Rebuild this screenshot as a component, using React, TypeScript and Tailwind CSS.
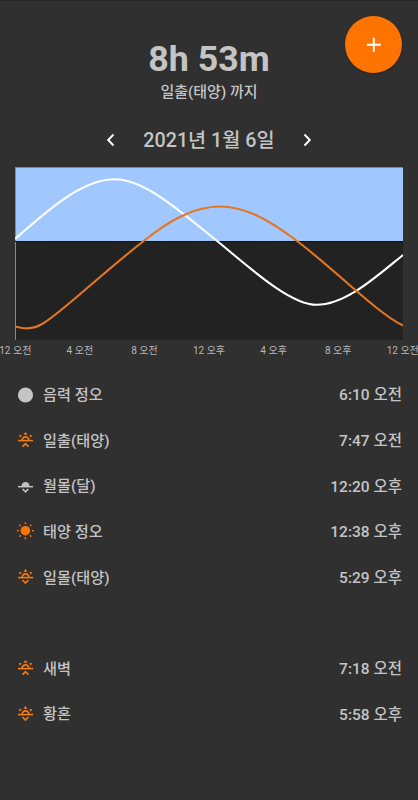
type IconKind = "moon" | "sun" | "sunrise" | "sunset" | "moonset";

const ORANGE = "#ff7300";
const GREY = "#c4c4c4";

const MOON_CURVE =
  "M0 72C33 43 67 12.3 99.7 12.3C130 12.3 166 45 203.3 75C230 96.5 274 137.8 301.5 137.8C331 137.8 362 109 388 88";

const SUN_CURVE =
  "M0 159.5C8 161.5 16 163.5 28 156.5C46 146 84 109 128 74.5C153 54.5 178 39.5 205 39.5C232 39.5 257 55 283.3 75C318 101 363 147 388 158.5";

function EventIcon({ kind }: { kind: IconKind }) {
  if (kind === "moon") {
    return (
      <svg className="size-5" viewBox="0 0 20 20">
        <circle cx="10.5" cy="9" r="7.6" fill={GREY} />
      </svg>
    );
  }
  if (kind === "sun") {
    return (
      <svg className="size-5" viewBox="0 0 20 20">
        <circle cx="10.4" cy="8.7" r="4.8" fill={ORANGE} />
        <g stroke={ORANGE} strokeWidth="1.4">
          {[0, 45, 90, 135, 180, 225, 270, 315].map((a) => (
            <path key={a} d="M10.4 .2v2" transform={`rotate(${a} 10.4 8.7)`} />
          ))}
        </g>
      </svg>
    );
  }
  if (kind === "moonset") {
    return (
      <svg className="size-5" viewBox="0 0 20 20" fill="none" stroke={GREY}>
        <path d="M6.4 9.5a4.1 4.6 0 0 1 8.2 0z" fill={GREY} stroke="none" />
        <path d="M3 9.7h15" strokeWidth="1.5" />
        <path d="M7.7 12l2.8 2.8 2.8-2.8" strokeWidth="1.7" />
      </svg>
    );
  }
  return (
    <svg className="size-5" viewBox="0 0 20 20" fill="none" stroke="#f47a14">
      <path d="M3 9.6h15" strokeWidth="1.6" />
      <path d="M7.1 9.2a3.4 3.4 0 1 1 6.8 0" strokeWidth="1.7" />
      <path d="M10.5 1l2.1 2.7H8.4zM3.7 4.2l3.1-.3-1.6 2.8zM17.3 4.2l-3.1-.3 1.6 2.8z" fill="#f47a14" stroke="none" />
      <path d={kind === "sunrise" ? "M7.5 15.7l3-3 3 3" : "M7.5 12l3 3 3-3"} strokeWidth="1.7" />
    </svg>
  );
}

function EventRow({ kind, label, time }: { kind: IconKind; label: string; time: string }) {
  return (
    <li className="flex h-[45.6px] items-center">
      <EventIcon kind={kind} />
      <span className="ml-2 text-[15.2px]">{label}</span>
      <span className="ml-auto pt-px text-[15.5px]">{time}</span>
    </li>
  );
}

function Chevron({ d }: { d: string }) {
  return (
    <svg className="size-4" viewBox="0 0 16 16" fill="none" stroke="white" strokeWidth="1.9">
      <path d={d} />
    </svg>
  );
}

export default function App() {
  return (
    <main className="relative flex h-[800px] w-[418px] flex-col overflow-hidden border-t border-[#262626] bg-[#303030] font-['Roboto','Noto_Sans_CJK_KR',sans-serif] font-medium text-[#c4c4c4]">
      <button className="absolute top-[15px] left-[345px] flex size-[57px] items-center justify-center rounded-full bg-[#ff7300] shadow-[0_1px_3px_rgba(0,0,0,0.25)]">
        <svg className="size-4" viewBox="0 0 16 16" stroke="white" strokeWidth="1.9">
          <path d="M7.8 .7v14M.8 7.7h14" />
        </svg>
      </button>
      <header className="flex flex-col items-center pt-9">
        <h1 className="h-11 text-[35.8px] leading-[44px] font-bold">8h 53m</h1>
        <p className="h-5 text-[15px] leading-[23px]">일출(태양) 까지</p>
      </header>
      <nav className="mt-[25px] flex h-7 items-center justify-center">
        <Chevron d="M10.5 2.5L5.2 8l5.3 5.5" />
        <span className="w-[180px] pt-px text-center text-[19.7px] leading-[29px]">2021년 1월 6일</span>
        <Chevron d="M5.5 2.5L10.8 8l-5.3 5.5" />
      </nav>
      <section className="mt-[13px] ml-[15px] w-[388px]">
        <svg className="block h-[173px] w-[388px]" viewBox="0 0 388 173">
          <path fill="#222222" d="M0 0h388v173H0z" />
          <path fill="#a0c8ff" d="M0 .5h388v73.5H0z" />
          <path d="M.5 0v173" stroke="#85898e" strokeWidth="1" />
          <path d="M0 .5h388" stroke="#718aab" strokeWidth="1" />
          <path d="M0 74.5h388" stroke="#111" strokeWidth="1" />
          <path d={MOON_CURVE} fill="none" stroke="white" strokeWidth="2.1" />
          <path d={SUN_CURVE} fill="none" stroke="#e47622" strokeWidth="2.1" />
        </svg>
      </section>
      <div className="-mx-5 flex h-5 w-[458px] justify-between pr-[3px] pl-[3px] text-[10px] leading-[21px] font-normal text-[#b8b8b8]">
        {["12 오전", "4 오전", "8 오전", "12 오후", "4 오후", "8 오후", "12 오전"].map((label, i) => (
          <span key={i} className="w-[64.6px] text-center">{label}</span>
        ))}
      </div>
      <ul className="mt-[12.8px] pr-4 pl-[15px]">
        <EventRow kind="moon" label="음력 정오" time="6:10 오전" />
        <EventRow kind="sunrise" label="일출(태양)" time="7:47 오전" />
        <EventRow kind="moonset" label="월몰(달)" time="12:20 오후" />
        <EventRow kind="sun" label="태양 정오" time="12:38 오후" />
        <EventRow kind="sunset" label="일몰(태양)" time="5:29 오후" />
      </ul>
      <ul className="mt-[45.6px] pr-4 pl-[15px]">
        <EventRow kind="sunrise" label="새벽" time="7:18 오전" />
        <EventRow kind="sunset" label="황혼" time="5:58 오후" />
      </ul>
    </main>
  );
}
